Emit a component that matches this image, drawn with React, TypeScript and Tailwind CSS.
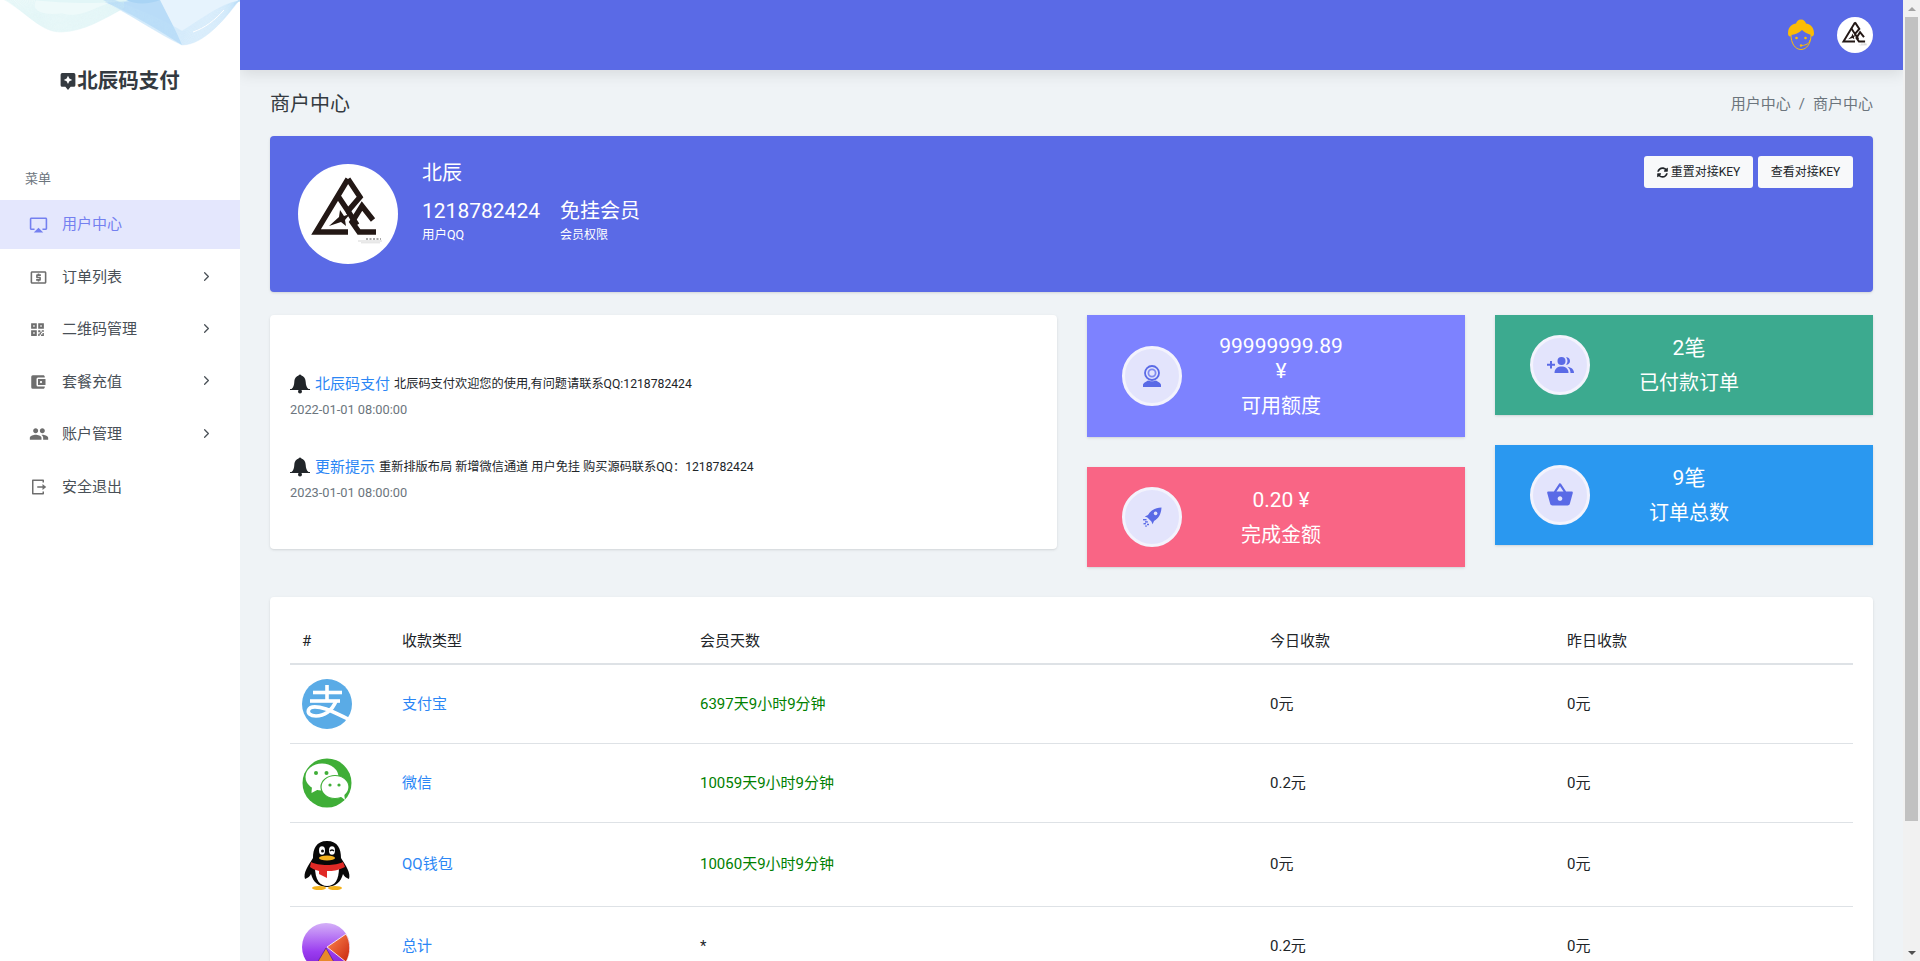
import type { ReactNode } from "react";
import { ChevronRight } from "lucide-react";
import { FaSyncAlt } from "react-icons/fa";
import { MdAirplay, MdLocalAtm, MdAccountBalanceWallet, MdPeople, MdShoppingBasket } from "react-icons/md";
import { RiQrCodeFill, RiLogoutBoxRLine } from "react-icons/ri";

// fan of thin lines for the ribbon at the top of the sidebar
function Wave() {
  const teal = Array.from({ length: 16 }, (_, i) => {
    const t = i * 2.2;
    return `M${4 + t} -2 C28 ${14 - t * 0.1} 42 ${33 - t * 0.5} 62 ${32 - t * 0.55} C84 ${31 - t * 0.3} 102 ${20 - t * 0.6} 124 ${8 - t * 0.2}`;
  });
  const blue = Array.from({ length: 24 }, (_, i) => {
    const t = i * 1.5;
    return `M${100 + t * 0.4} ${-2 + t * 0.05} C130 ${14 - t * 0.2} 158 ${34 - t * 0.5} 182 ${45 - t * 0.4} C204 ${45 - t * 0.8} 226 ${18 - t * 0.5} 240 ${-2 + t * 0.1}`;
  });
  return (
    <svg className="absolute left-0 top-0" width="240" height="50" viewBox="0 0 240 50" fill="none">
      <path d="M4 0 C28 14 42 33 62 32 C84 31 102 20 124 8 L138 0 Z" fill="#eefafa" />
      <path d="M100 0 C130 14 158 34 182 45 C204 45 226 18 240 0 Z" fill="#e6f3fd" />
      <path d="M100 0 C130 12 158 30 182 45 C176 30 168 16 160 0 Z" fill="#b9dcf8" />
      <path d="M34 0 C64 4 110 4 140 0 Z" fill="#e2f6f7" />
      <path d="M126 0 C136 5 150 4 160 0 Z" fill="#a9d4f5" />
      {teal.map((d, i) => (
        <path key={i} d={d} stroke="#cfeff0" strokeWidth="0.3" />
      ))}
      {blue.map((d, i) => (
        <path key={i} d={d} stroke="#bfe0f9" strokeWidth="0.3" />
      ))}
      <path d="M193 32 C205 28 215 20 224 10" stroke="#fff" strokeWidth="1" />
    </svg>
  );
}

function BrandMark() {
  return (
    <svg width="16" height="19" viewBox="0 0 15 18">
      <path d="M2 1 H13 A1.5 1.5 0 0 1 14.5 2.5 V12.5 A1.5 1.5 0 0 1 13 14 H10 L7.5 17 L5 14 H2 A1.5 1.5 0 0 1 .5 12.5 V2.5 A1.5 1.5 0 0 1 2 1 Z" fill="#343a40" />
      <path d="M7.5 3.6 L8.8 6.2 L11.5 7.5 L8.8 8.8 L7.5 11.4 L6.2 8.8 L3.5 7.5 L6.2 6.2 Z" fill="#fff" />
    </svg>
  );
}

function BcAvatar({ size }: { size: number }) {
  return (
    <span className="block shrink-0 rounded-full bg-white" style={{ width: size, height: size }}>
      <svg width={size} height={size} viewBox="0 0 100 100" fill="none">
        <g stroke="#231815" strokeWidth="5.4" strokeLinejoin="miter">
          <path d="M50 15 L18 68 H50" />
          <path d="M50 15 L62 33 L50 47 L40 32" />
          <path d="M50 47 L59 61" />
          <path d="M75 56 L64 42 L54 58 L61 68 H78" />
        </g>
        <path d="M31 62 L41 53 L42 46 L46 52 L52 50 L47 56 L48 62 L43 58 Z" fill="#231815" />
        <path d="M60 77 H84" stroke="#aaa" strokeWidth="0.5" />
        <path d="M63 78.8 H82" stroke="#ddd" strokeWidth="1" />
        <path d="M68 75 H83" stroke="#555" strokeWidth="1" strokeDasharray="2 1.5" />
      </svg>
    </span>
  );
}

function AgentIcon() {
  return (
    <svg width="28" height="32" viewBox="0 0 28 32" fill="none">
      <circle cx="14" cy="5.5" r="5" fill="#fbbc04" />
      <path d="M1 14.5 C1 6 7 4 14 4 C21 4 27 6 27 14.5 C27 17 25 18 24 17 L24 16 C21 15 17 13 15 11 C12 14 8 15.5 4 16 L4 17 C3 18 1 17 1 14.5 Z" fill="#fbbc04" />
      <path d="M4 16 C4 24 8 30.5 14 30.5 C20 30.5 24 24 24 16" stroke="#fbbc04" strokeWidth="1" />
      <circle cx="9.5" cy="19" r="1.3" fill="#fbbc04" />
      <circle cx="18.5" cy="19" r="1.3" fill="#fbbc04" />
      <path d="M23 21 C22 25 19 26 15 26.5" stroke="#fbbc04" strokeWidth="1" />
      <circle cx="14" cy="26.5" r="1.2" fill="#fbbc04" />
    </svg>
  );
}

function Bell() {
  return (
    <svg width="20" height="20" viewBox="0 0 20 20" className="shrink-0">
      <circle cx="10" cy="2" r="1.6" fill="#212529" />
      <path d="M10 1.5 C6 1.5 4.5 4.5 4.3 8 C4.1 11 3.5 13.5 1.5 15 H18.5 C16.5 13.5 15.9 11 15.7 8 C15.5 4.5 14 1.5 10 1.5 Z" fill="#212529" />
      <rect x="0" y="15" width="20" height="1" fill="#212529" />
      <circle cx="10" cy="17.6" r="2" fill="#212529" />
    </svg>
  );
}

function WebcamIcon() {
  return (
    <svg width="18" height="22" viewBox="0 0 18 22" fill="none">
      <circle cx="9" cy="8" r="7" stroke="#5a6ae6" strokeWidth="1.8" />
      <circle cx="9" cy="8" r="3.6" stroke="#7f8af0" strokeWidth="1.8" />
      <path d="M0 22 V20 C0 18 3 17 5 15.5 C7 16.5 11 16.5 13 15.5 C15 17 18 18 18 20 V22 Z" fill="#5a6ae6" />
    </svg>
  );
}

function RocketIcon() {
  return (
    <svg width="20" height="20" viewBox="0 0 20 20" fill="none">
      <path d="M19.5 .5 C13 .8 8.5 3.5 6 8 L2.8 9.4 L5.4 10.6 L9.4 14.6 L10.6 17.2 L12 14 C16.5 11.5 19.2 7 19.5 .5 Z" fill="#5a6ae6" />
      <circle cx="13.6" cy="6.4" r="1.8" fill="#e3e4fc" />
      <g fill="#5a6ae6">
        <rect x="1" y="12" width="3.5" height="1.4" />
        <rect x="3" y="14.2" width="2.8" height="1.4" />
        <rect x="1.5" y="16" width="2.4" height="1.4" />
        <rect x="5" y="16.8" width="2" height="1.4" />
        <rect x="3.2" y="18.4" width="1.6" height="1.3" />
      </g>
    </svg>
  );
}

function GroupAddIcon() {
  return (
    <svg width="27" height="16" viewBox="0 0 27 16" fill="#5a6ae6">
      <path d="M3 6.8 V4 H5 V6.8 H8 V8.8 H5 V11.6 H3 V8.8 H0 V6.8 Z" />
      <circle cx="14.5" cy="4" r="4" />
      <path d="M7.5 16 C7.5 11.5 11 9.6 14.5 9.6 C18 9.6 21.5 11.5 21.5 16 Z" />
      <path d="M19 .3 C21.5 .2 23 2 23 4 C23 6 21.5 7.8 19 7.7 C21 5.5 21 2.5 19 .3 Z" />
      <path d="M20.5 9.8 C24 10.4 27 12 27 16 H23.5 C23.5 13.5 22.5 11.5 20.5 9.8 Z" />
    </svg>
  );
}

function AlipayLogo() {
  return (
    <svg width="50" height="50" viewBox="0 0 50 50" fill="none">
      <circle cx="25" cy="25" r="25" fill="#5aabe6" />
      <g stroke="#fff" strokeWidth="3.6">
        <path d="M11 13.5 H40" />
        <path d="M25 6 V21" />
        <path d="M8 22 H38" />
        <path d="M34 22 C30 32 22 37 14 37 C8 37 5.5 34 6.5 31 C8 27 15 27 24 30 C32 33 40 37 48 41" />
      </g>
    </svg>
  );
}

function WechatLogo() {
  return (
    <svg width="50" height="50" viewBox="0 0 50 50">
      <circle cx="25" cy="25" r="24.5" fill="#3fae37" />
      <ellipse cx="20" cy="19" rx="16.5" ry="13.5" fill="#fff" />
      <path d="M10 28 L9.5 35 L17 31 Z" fill="#fff" />
      <ellipse cx="33" cy="29" rx="14" ry="11.5" fill="#fff" stroke="#3fae37" strokeWidth="1.2" />
      <path d="M38 38 L43 42 L42 35 Z" fill="#fff" />
      <circle cx="14" cy="15" r="2" fill="#3fae37" />
      <circle cx="24.5" cy="15" r="2" fill="#3fae37" />
      <circle cx="28" cy="27" r="1.6" fill="#3fae37" />
      <circle cx="37" cy="27" r="1.6" fill="#3fae37" />
    </svg>
  );
}

function QqLogo() {
  return (
    <svg width="50" height="50" viewBox="0 0 50 50">
      <path d="M25 1 C14 1 11 9 11 18 C6 26 1 33 3 39 C6 38 8 36 9 34 C11 42 17 47 25 47 C33 47 39 42 41 34 C42 36 44 38 47 39 C49 33 44 26 39 18 C39 9 36 1 25 1 Z" fill="#080808" />
      <path d="M13 27 C13 40 18 46 25 46 C33 46 37 40 37 27 Z" fill="#fff" />
      <ellipse cx="17" cy="48" rx="7" ry="2" fill="#f4b21c" />
      <ellipse cx="33" cy="48" rx="7" ry="2" fill="#f4b21c" />
      <path d="M9 22 C16 26 34 26 41 22 L43 27 C35 31 30 31 27 31 L25 31 V38 L17 34 V31 C14 30 10 29 8 27 Z" fill="#e02a26" />
      <ellipse cx="25" cy="18" rx="8" ry="2.6" fill="#f5b21e" />
      <ellipse cx="20" cy="10.5" rx="3" ry="4.2" fill="#fff" />
      <ellipse cx="30" cy="10.5" rx="3" ry="4.2" fill="#fff" />
      <circle cx="20.5" cy="11" r="1.5" fill="#111" />
      <path d="M28 11 Q30 9 32 11" stroke="#111" strokeWidth="1.2" fill="none" />
    </svg>
  );
}

function PieLogo() {
  return (
    <svg width="50" height="50" viewBox="0 0 50 50">
      <defs>
        <linearGradient id="pie-purple" x1="0" y1="0" x2="0" y2="1">
          <stop offset="0" stopColor="#d4b0f8" />
          <stop offset="0.6" stopColor="#9a3cf0" />
          <stop offset="1" stopColor="#7a1fd0" />
        </linearGradient>
        <linearGradient id="pie-orange" x1="0" y1="0" x2="1" y2="1">
          <stop offset="0" stopColor="#ff8a50" />
          <stop offset="1" stopColor="#c8240f" />
        </linearGradient>
      </defs>
      <circle cx="24" cy="25" r="24" fill="url(#pie-purple)" />
      <path d="M25 25 L44 12 C49 20 49 32 44 40 Z" fill="url(#pie-orange)" stroke="#fff" strokeWidth="0.8" />
      <path d="M12 46 L24 26 L36 47 Z" fill="#e8892a" stroke="#5a1aa0" strokeWidth="0.8" />
    </svg>
  );
}

const menu: { label: string; icon: ReactNode; arrow?: boolean }[] = [
  { label: "订单列表", icon: <MdLocalAtm size={19} />, arrow: true },
  { label: "二维码管理", icon: <RiQrCodeFill size={17} />, arrow: true },
  { label: "套餐充值", icon: <MdAccountBalanceWallet size={18} />, arrow: true },
  { label: "账户管理", icon: <MdPeople size={20} />, arrow: true },
  { label: "安全退出", icon: <RiLogoutBoxRLine size={18} /> },
];

function Sidebar() {
  return (
    <aside className="relative z-10 h-full w-[240px] shrink-0 overflow-hidden bg-white">
      <Wave />
      <div className="flex h-[169px] items-start justify-center pt-[70px] text-[#343a40]">
        <div className="flex items-center gap-px text-[20.5px] font-bold leading-[22px]">
          <BrandMark />
          <span>北辰码支付</span>
        </div>
      </div>
      <div className="pl-[25px] text-[13px] leading-[20px] text-[#6c757d]">菜单</div>
      <nav className="mt-[11px]">
        <div className="flex h-[49px] items-center bg-[#e4e7fd] pl-[29px] text-[15px] text-[#7480f0]">
          <span className="flex w-[33px] items-center">
            <MdAirplay size={19} />
          </span>
          用户中心
        </div>
        <ul className="mt-[2px]">
          {menu.map((m) => (
            <li key={m.label} className="flex h-[52.4px] items-center pl-[29px] pr-[26px] text-[15px] text-[#495057]">
              <span className="flex w-[33px] items-center text-[#6e6e6e]">{m.icon}</span>
              {m.label}
              {m.arrow && <ChevronRight size={15} strokeWidth={2} className="ml-auto -translate-y-px text-[#495057]" />}
            </li>
          ))}
        </ul>
      </nav>
    </aside>
  );
}

function HeroCard() {
  return (
    <section className="flex h-[156px] justify-between rounded bg-[#5a6ae6] pl-[28px] pr-[20px] pt-[20px] text-white shadow-sm">
      <div className="mt-[5px] flex">
        <div className="mt-[3px]">
          <BcAvatar size={100} />
        </div>
        <div className="ml-[24px]">
          <div className="text-[20px] leading-[25px]">北辰</div>
          <div className="mt-[12px] flex gap-[20px]">
            <div>
              <div className="text-[21px] leading-[26px]">1218782424</div>
              <div className="mt-[2px] text-[12.5px] leading-[18px]">用户QQ</div>
            </div>
            <div>
              <div className="text-[20px] leading-[26px]">免挂会员</div>
              <div className="mt-[2px] text-[12px] leading-[18px]">会员权限</div>
            </div>
          </div>
        </div>
      </div>
      <div className="flex gap-[5px]">
        <button className="flex h-[32px] w-[109px] items-center justify-center gap-[3px] rounded-[3px] bg-[#f8f9fa] text-[12px] text-[#212529]">
          <FaSyncAlt size={11} />
          重置对接KEY
        </button>
        <button className="h-[32px] w-[95px] rounded-[3px] bg-[#f8f9fa] text-[12px] text-[#212529]">查看对接KEY</button>
      </div>
    </section>
  );
}

function Notice({ title, text, time }: { title: string; text: string; time: string }) {
  return (
    <div>
      <div className="flex h-[24px] items-center">
        <Bell />
        <span className="ml-[5px] text-[15px] text-[#2b86f5]">{title}</span>
        <span className="ml-[4px] text-[12.2px] text-[#212529]">{text}</span>
      </div>
      <div className="mt-[5px] text-[12.8px] leading-[18px] text-[#6c757d]">{time}</div>
    </div>
  );
}

function Stat({ color, height, top, icon, lines, label }: { color: string; height: string; top: string; icon: ReactNode; lines: ReactNode; label: string }) {
  return (
    <div className={`flex items-center pl-[35px] text-white shadow-sm ${color} ${height}`}>
      <span className="flex h-[60px] w-[60px] shrink-0 items-center justify-center rounded-full border-[3px] border-[#f3f3fd] bg-[#e3e4fc] text-[#5a6ae6]">{icon}</span>
      <div className={`ml-[30px] w-[138px] self-start text-center ${top}`}>
        <div className="text-[21px] leading-[25px]">{lines}</div>
        <div className="mt-[7px] text-[20px] leading-[30px]">{label}</div>
      </div>
    </div>
  );
}

const rows = [
  { h: "h-[79px]", logo: <AlipayLogo />, name: "支付宝", days: "6397天9小时9分钟", today: "0元", yest: "0元", green: true },
  { h: "h-[79px]", logo: <WechatLogo />, name: "微信", days: "10059天9小时9分钟", today: "0.2元", yest: "0元", green: true },
  { h: "h-[84px]", logo: <QqLogo />, name: "QQ钱包", days: "10060天9小时9分钟", today: "0元", yest: "0元", green: true },
  { h: "h-[80px]", logo: <PieLogo />, name: "总计", days: "*", today: "0.2元", yest: "0元", green: false },
];

function PayTable() {
  return (
    <section className="mt-[30px] rounded bg-white px-[20px] pt-[20px] pb-[20px] shadow-sm">
      <table className="w-full table-fixed border-separate border-spacing-0 text-left text-[15px] text-[#212529]">
        <colgroup>
          <col className="w-[100px]" />
          <col className="w-[298px]" />
          <col className="w-[570px]" />
          <col className="w-[297px]" />
          <col />
        </colgroup>
        <thead>
          <tr>
            {["#", "收款类型", "会员天数", "今日收款", "昨日收款"].map((h) => (
              <th key={h} className="border-b-2 border-[#dee2e6] px-[12px] pb-[10px] pt-[12px] text-[15px] font-normal leading-[24px]">
                {h}
              </th>
            ))}
          </tr>
        </thead>
        <tbody>
          {rows.map((r) => (
            <tr key={r.name} className={r.h}>
              <td className="border-b border-[#dee2e6] px-[12px] align-middle">{r.logo}</td>
              <td className="border-b border-[#dee2e6] px-[12px] align-middle text-[#2b86f5]">{r.name}</td>
              <td className={`border-b border-[#dee2e6] px-[12px] align-middle ${r.green ? "text-[#008000]" : ""}`}>{r.days}</td>
              <td className="border-b border-[#dee2e6] px-[12px] align-middle">{r.today}</td>
              <td className="border-b border-[#dee2e6] px-[12px] align-middle">{r.yest}</td>
            </tr>
          ))}
        </tbody>
      </table>
    </section>
  );
}

function Scrollbar() {
  return (
    <div className="flex h-full w-[17px] shrink-0 flex-col bg-[#f1f1f1]">
      <div className="flex h-[17px] items-center justify-center">
        <span className="h-0 w-0 border-x-[4px] border-b-[4px] border-x-transparent border-b-[#a3a3a3]" />
      </div>
      <div className="mx-[2px] h-[804px] bg-[#c1c1c1]" />
      <div className="mt-auto flex h-[17px] items-center justify-center">
        <span className="h-0 w-0 border-x-[4px] border-t-[4px] border-x-transparent border-t-[#505050]" />
      </div>
    </div>
  );
}

export default function App() {
  return (
    <div className="flex h-[961px] overflow-hidden bg-[#eff3f6] font-['Roboto','Noto_Sans_CJK_SC',sans-serif]">
      <Sidebar />
      <div className="flex min-w-0 flex-1 flex-col overflow-hidden">
        <header className="flex h-[70px] shrink-0 items-center justify-end gap-[22px] bg-[#5a6ae6] pr-[30px] shadow-[0_4px_14px_rgba(0,0,0,0.1)]">
          <AgentIcon />
          <BcAvatar size={36} />
        </header>
        <main className="px-[30px]">
          <div className="flex h-[66px] items-center justify-between pt-[2px]">
            <h1 className="text-[20px] font-normal text-[#343a40]">商户中心</h1>
            <div className="flex gap-[8px] text-[15px] text-[#6c757d]">
              <span>用户中心</span>
              <span>/</span>
              <span>商户中心</span>
            </div>
          </div>
          <HeroCard />
          <div className="mt-[23px] flex items-start gap-[30px]">
            <section className="h-[234px] w-[787px] shrink-0 rounded bg-white pl-[20px] pt-[57px] shadow-sm">
              <Notice title="北辰码支付" text="北辰码支付欢迎您的使用,有问题请联系QQ:1218782424" time="2022-01-01 08:00:00" />
              <div className="mt-[36px]">
                <Notice title="更新提示" text="重新排版布局 新增微信通道 用户免挂 购买源码联系QQ：1218782424" time="2023-01-01 08:00:00" />
              </div>
            </section>
            <div className="flex flex-1 flex-col gap-[30px]">
              <Stat
                color="bg-[#7d82ff]"
                height="h-[122px]"
                top="pt-[19px]"
                icon={<WebcamIcon />}
                lines={
                  <>
                    99999999.89
                    <br />¥
                  </>
                }
                label="可用额度"
              />
              <Stat color="bg-[#f96585]" height="h-[100px]" top="pt-[21px]" icon={<RocketIcon />} lines="0.20 ¥" label="完成金额" />
            </div>
            <div className="flex flex-1 flex-col gap-[30px]">
              <Stat color="bg-[#3caa8f]" height="h-[100px]" top="pt-[21px]" icon={<GroupAddIcon />} lines="2笔" label="已付款订单" />
              <Stat color="bg-[#2a98f0]" height="h-[100px]" top="pt-[21px]" icon={<MdShoppingBasket size={28} />} lines="9笔" label="订单总数" />
            </div>
          </div>
          <PayTable />
        </main>
      </div>
      <Scrollbar />
    </div>
  );
}
